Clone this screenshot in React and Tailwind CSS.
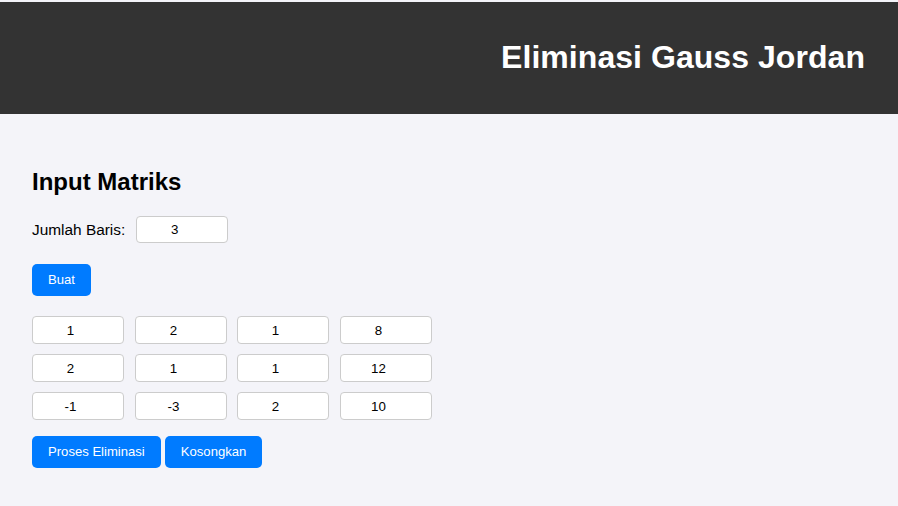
import React, { useState } from 'react';

const initial = [
  ['1', '2', '1', '8'],
  ['2', '1', '1', '12'],
  ['-1', '-3', '2', '10'],
];

const cellClass =
  'w-[92px] h-[28px] px-[2px] rounded-[4px] border border-[#cccccc] bg-white text-center text-[13.33px] text-black outline-none';

const colGap = ['', 'ml-[11px]', 'ml-[10px]', 'ml-[11px]'];

const btnClass = 'h-[32px] px-[16px] rounded-[5px] bg-[#007bff] text-white text-[13.1px]';

export default function App() {
  const [rows, setRows] = useState('3');
  const [matrix, setMatrix] = useState(initial);

  const setCell = (r, c, v) => {
    setMatrix((prev) => prev.map((row, i) => (i === r ? row.map((x, j) => (j === c ? v : x)) : row)));
  };

  return (
    <div className="min-h-[506px] bg-[#f4f4f9] pt-[2px] font-['Liberation_Sans',Arial,sans-serif]">
      <header className="h-[112px] bg-[#333333] flex items-center justify-end pr-[33px]">
        <h1 className="text-[32px] font-bold text-white tracking-[0.05px] mt-[-2px]">Eliminasi Gauss Jordan</h1>
      </header>

      <main className="px-[32px] pt-[52px]">
        <h2 className="text-[24px] font-bold text-black leading-[32px]">Input Matriks</h2>

        <div className="mt-[18px] flex items-center">
          <label className="text-[15.4px] text-black">Jumlah Baris:</label>
          <input
            type="number"
            value={rows}
            onChange={(e) => setRows(e.target.value)}
            className="ml-[11px] w-[92px] h-[27px] px-[2px] rounded-[4px] border border-[#cccccc] bg-white text-center text-[13.33px] text-black outline-none"
          />
        </div>

        <button className={`mt-[21px] ${btnClass}`}>Buat</button>

        <div className="mt-[20px] flex flex-col gap-[10px]">
          {matrix.map((row, r) => (
            <div key={r} className="flex">
              {row.map((v, c) => (
                <input
                  key={c}
                  type="number"
                  value={v}
                  onChange={(e) => setCell(r, c, e.target.value)}
                  className={`${cellClass} ${colGap[c]}`}
                />
              ))}
            </div>
          ))}
        </div>

        <div className="mt-[16px] flex gap-[4px]">
          <button className={btnClass}>Proses Eliminasi</button>
          <button onClick={() => setMatrix(initial.map((row) => row.map(() => '')))} className={btnClass}>
            Kosongkan
          </button>
        </div>
      </main>
    </div>
  );
}
